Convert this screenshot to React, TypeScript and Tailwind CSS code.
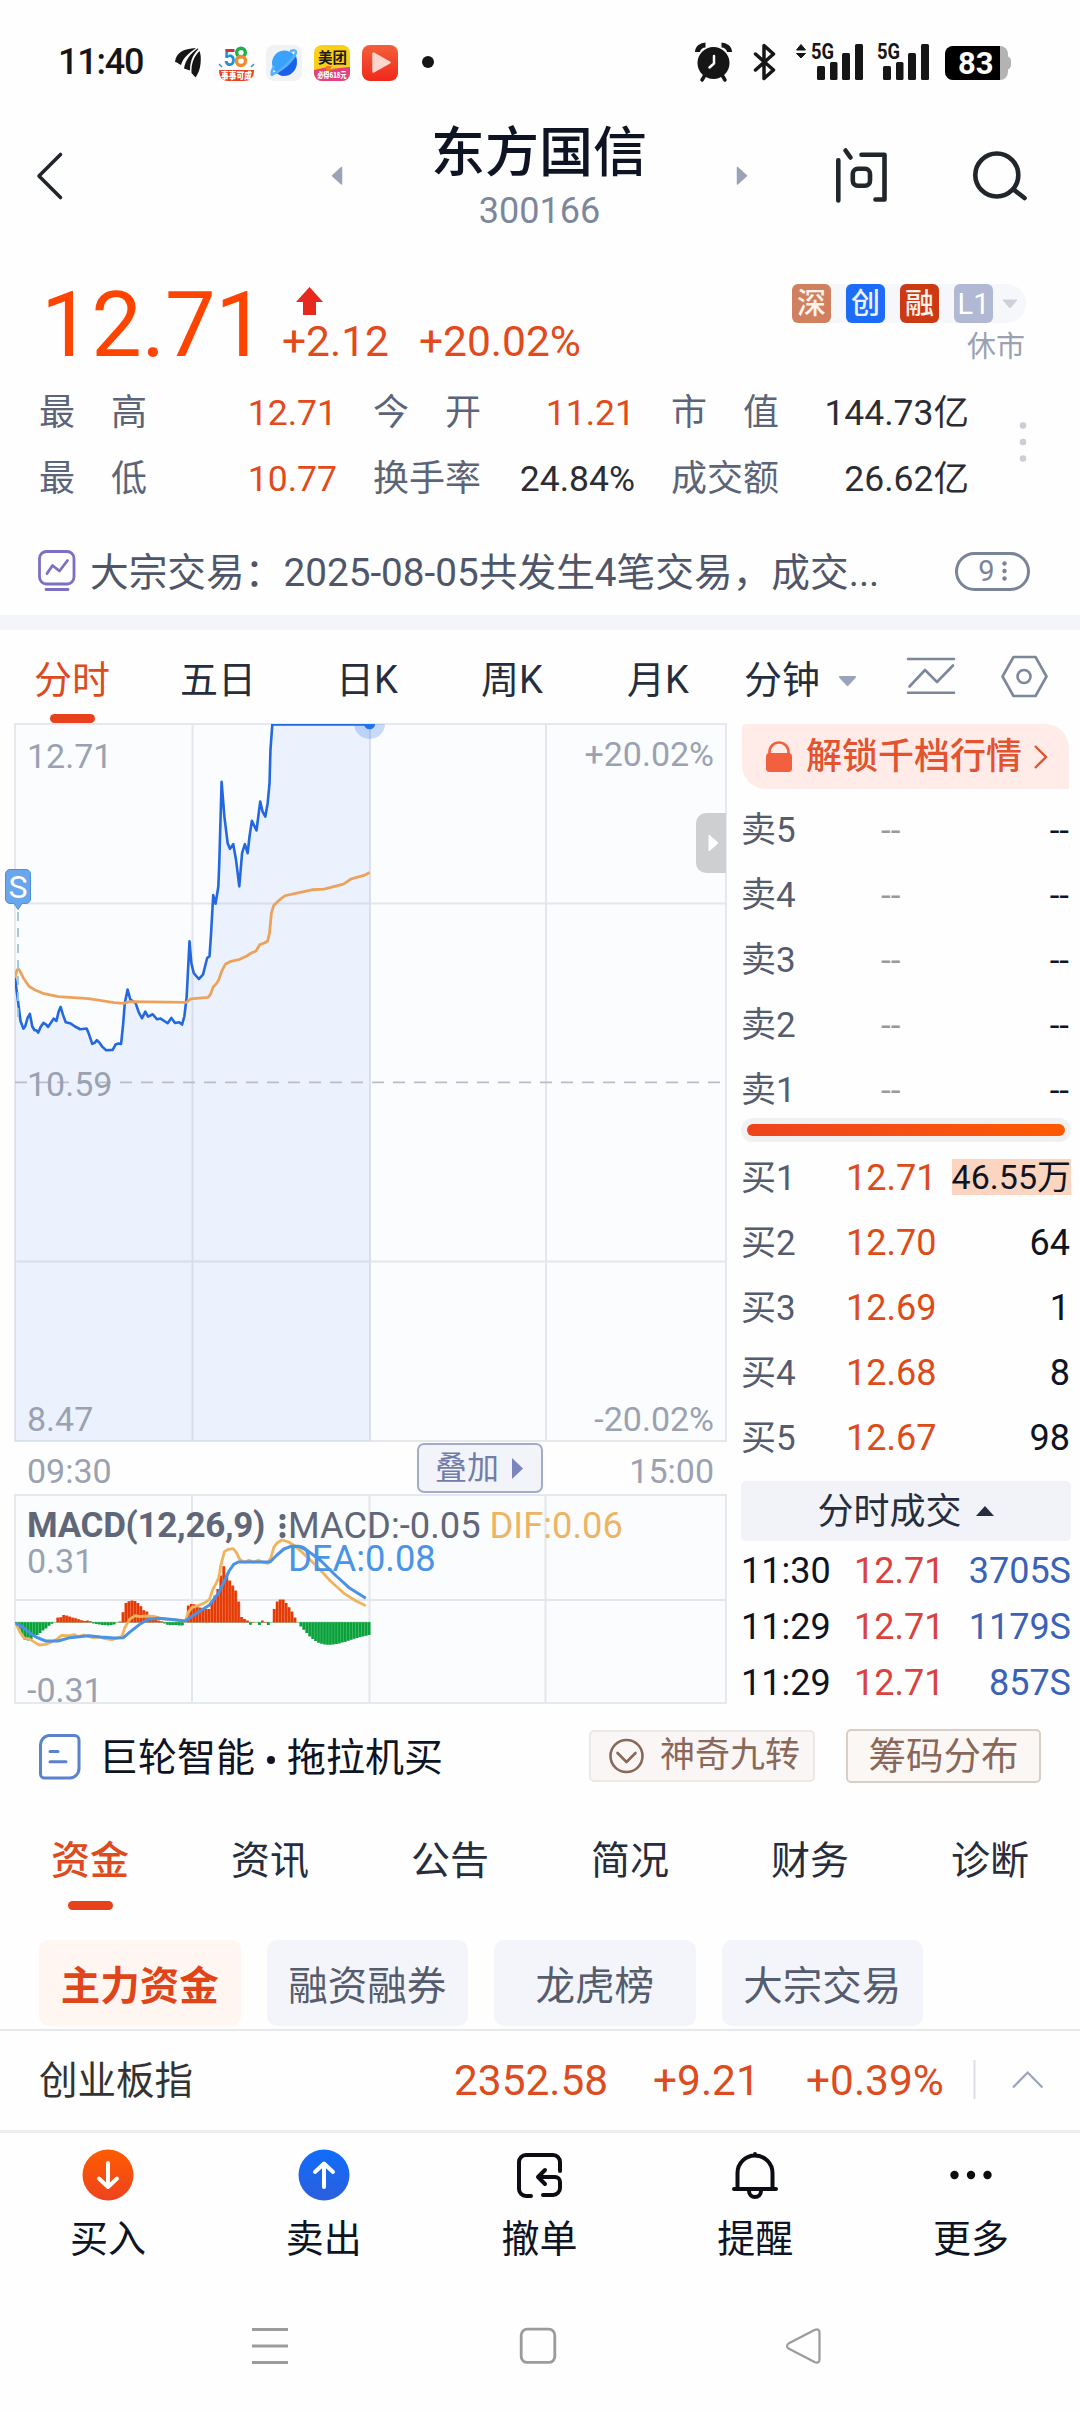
import type { ReactNode } from "react";

type IcoProps = { x: number; y: number; w: number; h: number; className?: string; children: ReactNode };

// Icon drawn on the page's own coordinate grid.
function Ico({ x, y, w, h, className = "", children }: IcoProps) {
  return (
    <svg className={`shrink-0 ${className}`} width={w} height={h} viewBox={`${x} ${y} ${w} ${h}`} fill="none">
      {children}
    </svg>
  );
}

function Signal({ arrows }: { arrows?: boolean }) {
  return (
    <Ico x={795} y={40} w={68} h={44}>
      {arrows && <path d="M796.500 50l4.500-5.500 4.500 5.500zM796.500 53.500h9l-4.500 4.500z" fill="#161616" stroke="#161616" strokeLinejoin="round" />}
      <text x="811" y="59" fontFamily="Roboto" fontWeight="700" fontSize="22" fill="#161616" textLength="23" lengthAdjust="spacingAndGlyphs">
        5G
      </text>
      <g fill="#161616">
        <rect x="817" y="66" width="8" height="14" rx="1.500" />
        <rect x="830" y="62" width="7.500" height="18" rx="1.500" />
        <rect x="842" y="53" width="8" height="27" rx="1.500" />
        <rect x="855" y="44" width="8" height="36" rx="1.500" />
      </g>
    </Ico>
  );
}

function StatusBar() {
  return (
    <div className="flex h-[118px] items-start">
      <span className="ml-[58px] mt-[38px] w-[90px] text-[36px] leading-[48px] font-medium tracking-[-1.2px] text-[#161616]">11:40</span>
      <Ico x={148} y={40} w={300} h={44} className="mt-[40px]">
        <path d="M175 62c1-9 8-13.500 21-14-7 5-13 10-15 17-3-1.500-4-3-6-3z" fill="#161616" />
        <path d="M197.500 48.500c-8 6-12 12-13.500 20l6 2c0-8 2-15 8.500-21.500z" fill="#161616" />
        <path d="M199.500 51c1.500 4 1.500 8 1 13s-2 9-5 13.500l-4-4.500c-0.500-9 2-16 8-22z" fill="#161616" />

        <rect x="218" y="45" width="36" height="36" rx="8" fill="#fff" />
        <text x="223.500" y="66" fontFamily="Inter" fontWeight="700" fontSize="23" fill="#1f8fd6" textLength="12" lengthAdjust="spacingAndGlyphs">5</text>
        <path d="M225.500 50.500h9" stroke="#d3303b" strokeWidth="3" />
        <circle cx="241" cy="52.500" r="4.300" stroke="#1fb04c" strokeWidth="3.400" />
        <circle cx="241" cy="61" r="4.500" stroke="#f08a2c" strokeWidth="3.400" />
        <path d="M219 70h35c0 7-3 11-10 11h-16c-6 0-9-4-9-11z" fill="#e8431f" />
        <text x="221" y="78.500" fontFamily="Noto Sans CJK SC" fontWeight="900" fontSize="9.500" fill="#fff" textLength="31" lengthAdjust="spacingAndGlyphs">事事可成</text>
        <path d="M219 64l3 3M254 64l-3 3" stroke="#3b8fd8" strokeWidth="1.500" />

        <rect x="266" y="45" width="36" height="36" rx="8" fill="#f1f2f4" />
        <circle cx="284.500" cy="63" r="12.500" fill="#3aa2fb" />
        <path d="M276 72c8-1 15-8 20-16 3 9-2 20-12 20-4 0-6-2-8-4z" fill="#1c5fe8" />
        <path d="M272 75c-1-2 0-5 2-8M291 51c3-1 5-1 5 1s-2 5-5 8c-5 6-12 12-18 14" stroke="#53b2fb" strokeWidth="2.500" strokeLinecap="round" />

        <clipPath id="mt"><rect x="314" y="45" width="36" height="36" rx="8" /></clipPath>
        <g clipPath="url(#mt)">
          <rect x="314" y="45" width="36" height="36" fill="#fbcf17" />
          <path d="M314 70l14-3 2 2 20-2v14h-36z" fill="#e1417f" />
          <path d="M326 66h6l-2 3h6l-10 3z" fill="#f07a1e" />
        </g>
        <text x="318" y="63" fontFamily="Noto Sans CJK SC" fontWeight="700" fontSize="14.500" fill="#1a1a1a">美团</text>
        <text x="317.500" y="78" fontFamily="Noto Sans CJK SC" fontWeight="900" fontSize="8" fill="#fff" textLength="29" lengthAdjust="spacingAndGlyphs">必得618元</text>

        <linearGradient id="pl" x1="0" y1="0" x2="0" y2="1"><stop stopColor="#f2603a" /><stop offset="1" stopColor="#f0281c" /></linearGradient>
        <rect x="362" y="45" width="36" height="36" rx="8" fill="url(#pl)" />
        <path d="M373.500 53.500v18l16-9z" fill="#ffd5cd" stroke="#ffd5cd" strokeWidth="2.500" strokeLinejoin="round" />
        <circle cx="428" cy="62" r="6" fill="#161616" />
      </Ico>
      <div className="ml-auto mr-[68px] mt-[40px] flex">
        <Ico x={692} y={40} w={103} h={44}>
          <circle cx="713.500" cy="63" r="16" fill="#161616" />
          <path d="M697.500 52c0-4 4-7 8-7M729.500 52c0-4-4-7-8-7" stroke="#161616" strokeWidth="5" />
          <path d="M705 75l-3 5M722 75l3 5" stroke="#161616" strokeWidth="3.500" strokeLinecap="round" />
          <path d="M714 56v7.500l-4.500 4" stroke="#fff" strokeWidth="2.500" strokeLinecap="round" />
          <path d="M755.500 54l18 16-9.500 8.500v-33l9.500 8.500-18 16" stroke="#161616" strokeWidth="3.500" strokeLinejoin="round" strokeLinecap="round" />
        </Ico>
        <Signal arrows />
        <div className="-ml-[2px]">
          <Signal />
        </div>
        <Ico x={929} y={40} w={83} h={44}>
          <rect x="1000" y="56" width="11" height="14" rx="5" fill="#b3b3b3" />
          <rect x="945" y="46" width="63" height="34" rx="8" fill="#b3b3b3" />
          <path d="M953 46h47v34h-47a8 8 0 0 1-8-8v-18a8 8 0 0 1 8-8z" fill="#000" />
          <text x="958" y="74.300" fontFamily="Roboto" fontWeight="700" fontSize="31" fill="#fff">83</text>
        </Ico>
      </div>
    </div>
  );
}

function Header() {
  return (
    <div className="flex h-[119px] items-center">
      <Ico x={0} y={118} w={400} h={119}>
        <path d="M60.500 154.500L39 176l21.500 21.500" stroke="#20262c" strokeWidth="3.600" strokeLinecap="round" strokeLinejoin="round" />
        <path d="M341.500 167.500v16.500l-9-8.200z" fill="#9aa3b8" stroke="#9aa3b8" strokeWidth="1.500" strokeLinejoin="round" />
      </Ico>
      <div className="w-[278px] text-center">
        <div className="h-[66px] text-[54px] leading-[72px] font-medium text-[#0e1424]">东方国信</div>
        <div className="h-[53px] pl-[1px] text-[36px] leading-[55px] text-[#7d879b]">300166</div>
      </div>
      <Ico x={678} y={118} w={402} h={119}>
        <path d="M737.500 167.500v16.500l9-8.200z" fill="#9aa3b8" stroke="#9aa3b8" strokeWidth="1.500" strokeLinejoin="round" />
        <g stroke="#20262c" strokeWidth="4.600" strokeLinecap="round" strokeLinejoin="round">
          <path d="M838.300 160.300v40.200M845.500 150.500l5 7M861.500 154.800h23v44.700h-9" />
          <rect x="852.800" y="168.800" width="17.200" height="17" rx="5" />
          <circle cx="996.800" cy="175" r="21.500" />
          <path d="M1013.500 189.500l11 8.500" />
        </g>
      </Ico>
    </div>
  );
}

const tags = [
  { t: "深", c: "bg-[#d07f5f] text-[#fff3ec]" },
  { t: "创", c: "bg-[#1d6cf7] text-[#eaf2ff]" },
  { t: "融", c: "bg-[#cb3a12] text-[#fff0ea]" },
  { t: "L1", c: "bg-[#b1b8d4] text-white" },
];

const stats = [
  { w: "w-[298px]", rows: [["最高", "12.71", 1], ["最低", "10.77", 1]] },
  { w: "w-[262px]", rows: [["今开", "11.21", 1], ["换手率", "24.84%", 0]] },
  { w: "w-[298px]", rows: [["市值", "144.73亿", 0], ["成交额", "26.62亿", 0]] },
];

function Quote() {
  return (
    <div className="h-[378px] pt-[42px]">
      <div className="flex h-[90px]">
        <span className="ml-[41px] w-[241px] text-[90px] leading-[94px] tracking-[-0.3px] text-[#ff4400]">12.71</span>
        <div>
          <Ico x={282} y={279} w={60} h={38} className="block">
            <path d="M309.500 287l13.500 15h-7v13h-13v-13h-7z" fill="#e8281f" />
          </Ico>
          <div className="flex gap-[30px] text-[42.5px] leading-[49px] text-[#e34a1b]">
            <span>+2.12</span>
            <span>+20.02%</span>
          </div>
        </div>
        <div className="mt-[5px] mr-[54px] ml-auto flex flex-col items-end">
          <div className="flex items-center gap-[15px] rounded-r-[20px] rounded-l-[8px] bg-[#f6f7fa] pr-[8px]">
            {tags.map((t, i) => (
              <span key={t.t} className={`h-[39px] w-[39px] rounded-[6px] text-center text-[29px] leading-[41px] ${i < 3 ? "font-medium" : ""} ${t.c}`}>
                {t.t}
              </span>
            ))}
            <svg className="-ml-[6px]" width="16" height="10" viewBox="0 0 16 10"><path d="M1 1h14L8 9z" fill="#ccd1da" stroke="#ccd1da" strokeLinejoin="round" /></svg>
          </div>
          <span className="mt-[4px] mr-[1px] text-[29px] leading-[40px] text-[#9aa1b1]">休市</span>
        </div>
      </div>
      <div className="mt-[11px] flex h-[131px] gap-[36px] pl-[39px] text-[36px] leading-[66px]">
        {stats.map((s, i) => (
          <div key={i} className={s.w}>
            {s.rows.map(([l, v, up]) => (
              <div key={l} className="flex h-[66px] justify-between">
                <span className="flex w-[108px] justify-between text-[#5c6478]">
                  {String(l).split("").map((c) => <span key={c}>{c}</span>)}
                </span>
                <span className={up ? "text-[35.5px] text-[#e34a1b]" : "text-[35.5px] text-[#2b2d33]"}>{v}</span>
              </div>
            ))}
          </div>
        ))}
        <Ico x={1005} y={380} w={30} h={131}>
          <g fill="#c9ced9"><circle cx="1023" cy="425.500" r="3.300" /><circle cx="1023" cy="442" r="3.300" /><circle cx="1023" cy="458.500" r="3.300" /></g>
        </Ico>
      </div>
      <div className="mt-[16px] flex h-[88px] items-center text-[38.7px] text-[#4f5669]">
        <Ico x={0} y={527} w={90} h={88}>
          <g stroke="#7c70c4" strokeWidth="2.800" strokeLinecap="round" strokeLinejoin="round">
            <rect x="39.500" y="551.500" width="34.500" height="32.500" rx="7" />
            <path d="M47 573.500l5.500-8 7 5.500 8-10.500M46 589.500h22" />
          </g>
        </Ico>
        <span className="w-[865px] pt-[3px] leading-[60px]">大宗交易：2025-08-05共发生4笔交易，成交...</span>
        <span className="flex h-[39px] w-[75px] items-center justify-center gap-[7px] rounded-full border-[3px] border-[#7a8397] text-[29px] leading-[33px] text-[#7a8397]">
          9
          <svg width="5" height="20" viewBox="0 0 5 20" fill="#7a8397"><circle cx="2.500" cy="2.500" r="2.200" /><circle cx="2.500" cy="10" r="2.200" /><circle cx="2.500" cy="17.500" r="2.200" /></svg>
        </span>
      </div>
    </div>
  );
}

function ChartTabs() {
  return (
    <div className="flex h-[94px] pl-[34px] text-[38px] leading-[100px] text-[#262d3d]">
      <span className="relative w-[146px] text-[#dd4b20]">
        分时
        <i className="absolute top-[84px] left-[16px] h-[9px] w-[45px] rounded-full bg-[#e8421c]" />
      </span>
      <span className="w-[156px]">五日</span>
      <span className="w-[145px]">日K</span>
      <span className="w-[146px]">周K</span>
      <span className="w-[117px]">月K</span>
      <span className="w-[76px]">分钟</span>
      <Ico x={820} y={630} w={260} h={94}>
        <path d="M840 677h15l-7.500 8z" fill="#9aa3b8" stroke="#9aa3b8" strokeWidth="2" strokeLinejoin="round" />
        <g stroke="#7d879b" strokeWidth="2.600" strokeLinecap="round" strokeLinejoin="round">
          <path d="M908 659h46M908 692.800h46M909.500 686.500l15.500-16.500 12 12 16-16.500" />
          <path d="M1002.500 676.500l11-19.500h22l11 19.500-11 19.500h-22z" />
          <circle cx="1024" cy="676.500" r="6.500" />
        </g>
      </Ico>
    </div>
  );
}

const priceLine =
  "32,1045 38,1110 44,1175 50,1197 54,1190 59,1165 64,1153 69,1190 74,1202 78,1202 82,1209 87,1192 93,1180 99,1185 103,1192 108,1182 115,1167 121,1174 126,1145 130,1132 135,1155 141,1178 152,1182 160,1190 172,1199 186,1197 190,1210 198,1243 203,1240 208,1232 214,1240 220,1252 228,1262 242,1261 248,1245 254,1242 260,1243 264,1190 268,1120 274,1080 280,1110 291,1120 298,1148 305,1166 312,1146 318,1161 328,1154 337,1169 345,1167 360,1181 368,1165 376,1180 385,1178 391,1185 396,1160 401,1100 407,935 411,1000 416,1030 427,1048 436,1035 445,985 450,980 453,920 458,796 463,822 469,770 471,700 476,456 482,560 489,640 494,657 501,643 507,690 514,770 520,670 526,643 532,670 536,620 541,573 551,602 559,515 564,545 570,560 575,520 579,460 581,360 585,283 796,283";
const avgLine =
  "32,1045 36,1022 39,1017 43,1025 50,1045 62,1070 75,1081 92,1091 125,1101 190,1107 245,1119 265,1121 278,1116 400,1118 410,1108 447,1103 452,1095 458,1072 465,1062 470,1050 476,1025 484,1004 496,995 515,989 530,979 540,970 550,964 558,945 568,940 575,934 579,910 583,850 588,827 600,811 612,798 640,789 670,780 696,778 715,771 738,763 755,747 782,737 794,728";

const bars = [
  -4, -22, -42, -53, -54, -50, -44, -38, -32, -24, -18, -10, -4, 0, 14, 15, 22, 20, 17, 14, 12, 9, 6, 4, 5, 3, -3, -5, -6, -8,
  -8, -9, -8, -6, 0, 2, 30, 58, 63, 65, 64, 58, 48, 36, 32, 22, 12, 12, 5, 3, -3, -7, -8, -8, -8, -9, -9, 0, 50, 55,
  54, 52, 44, 40, 40, 40, 60, 80, 100, 140, 168, 140, 125, 110, 95, 62, 16, 10, 5, -7, 1, 0, -8, 5, 1, -8, 0, 40, 62, 68,
  68, 58, 45, 32, 14, 0, -12, -22, -32, -42, -50, -56, -61, -64, -66, -67, -67, -66, -65, -63, -60, -58, -55, -52, -49, -47, -44, -42, -40, -38,
];
const dif =
  "34,427 42,452 52,472 62,473 72,482 84,492 98,490 112,482 122,475 132,463 150,464 160,461 168,467 180,462 200,470 215,468 225,473 240,476 255,470 262,466 268,440 278,415 290,404 300,407 312,405 330,406 345,412 360,415 375,416 398,421 404,395 412,380 425,374 440,365 450,355 457,325 464,308 470,290 474,255 482,212 490,205 501,203 508,215 515,235 525,244 535,238 545,244 555,238 565,244 575,247 582,230 588,200 595,186 606,177 620,183 632,193 650,215 680,255 710,300 740,338 765,360 786,374";
const dea =
  "34,427 45,435 60,452 80,470 98,480 125,480 150,470 190,464 215,468 245,471 265,470 280,452 300,430 318,415 340,412 365,415 398,420 410,408 430,390 450,372 470,335 482,300 492,270 502,250 512,243 580,243 595,222 610,204 625,196 642,196 660,208 690,240 720,282 750,320 786,352";

function Grid({ mid }: { mid: number[] }) {
  return (
    <g stroke="#e3e6ec" strokeWidth="2">
      <path d={"M176.500 0v720M354.500 0v720M531 0v720" + mid.map((m) => `M0 ${m}h711`).join("")} />
    </g>
  );
}

function Charts() {
  return (
    <div className="-mt-[1px] ml-[14px] w-[713px] text-[34px] leading-[40px] text-[#9aa2b2]">
      <div className="relative h-[719px] border-2 border-[#e6e8ed] bg-[#fbfcfe]">
        <svg className="absolute inset-0" width="710" height="715" viewBox="0 0 711 717" fill="none"><Grid mid={[179, 538]} /></svg>
        <svg className="absolute -top-[1px] -left-[1px] overflow-hidden" width="711" height="717" viewBox="32 282 1528 2154" preserveAspectRatio="none" fill="none">
          <polygon points={`${priceLine} 796,2436 32,2436`} fill="#2b74ee" fillOpacity="0.07" />
          <path d="M32 1358.500h1528" stroke="#b9bdca" strokeWidth="1.800" strokeDasharray="12 9" vectorEffect="non-scaling-stroke" />
          <polyline points={priceLine} stroke="#2468e0" strokeWidth="2.600" strokeLinejoin="round" vectorEffect="non-scaling-stroke" />
          <polyline points={avgLine} stroke="#eda25c" strokeWidth="2.800" strokeLinejoin="round" vectorEffect="non-scaling-stroke" />
          <ellipse cx="794" cy="282" rx="33" ry="45" fill="#2b74ee" fillOpacity="0.25" />
          <ellipse cx="794" cy="282" rx="12" ry="16" fill="#2173f2" />
        </svg>
        <span className="absolute top-[11px] left-[11px]">12.71</span>
        <span className="absolute top-[9px] right-[11px]">+20.02%</span>
        <span className="absolute top-[339px] left-[11px]">10.59</span>
        <span className="absolute bottom-[1px] left-[11px]">8.47</span>
        <span className="absolute right-[11px] bottom-[1px]">-20.02%</span>
        <span className="absolute top-[88px] -right-[1px] flex h-[60px] w-[30px] items-center justify-end rounded-l-[10px] bg-[#cdcfd1] pr-[7px]">
          <svg width="11" height="18" viewBox="0 0 11 18"><path d="M1 1v16l9-8z" fill="#fff" stroke="#fff" strokeLinejoin="round" /></svg>
        </span>
        <svg className="absolute top-[143px] -left-[12px]" width="30" height="150" viewBox="4 868 30 150" fill="none">
          <path d="M18 912v106" stroke="#9cc4e2" strokeWidth="1.800" strokeDasharray="9 7" />
          <path d="M10 869.500h16a4.500 4.500 0 0 1 4.500 4.500v25a4.500 4.500 0 0 1-4.500 4.500h-4l-4 6-4-6h-4a4.500 4.500 0 0 1-4.500-4.500v-25a4.500 4.500 0 0 1 4.500-4.500z" fill="#6aa6ec" stroke="#4f8fd8" />
          <text x="8.500" y="898" fontFamily="Roboto" fontSize="31" fill="#fff" textLength="19" lengthAdjust="spacingAndGlyphs">S</text>
        </svg>
      </div>
      <div className="flex h-[52px] items-center justify-between px-[13px]">
        <span className="pt-[5px]">09:30</span>
        <span className="ml-[218px] flex h-[50px] w-[126px] items-center justify-center gap-[12px] rounded-[7px] border-2 border-[#a3abc8] bg-[#f3f4fa] text-[32px] text-[#717da8]">
          叠加
          <svg width="13" height="23" viewBox="0 0 13 23"><path d="M1 1v21l11-10.500z" fill="#7a86bd" /></svg>
        </span>
        <span className="pt-[5px]">15:00</span>
      </div>
      <div className="relative h-[210px] border-2 border-[#e6e8ed] bg-[#fbfcfe]">
        <svg className="absolute inset-0" width="709" height="206" viewBox="0 0 711 206" preserveAspectRatio="none"><Grid mid={[104]} /></svg>
        <svg className="absolute -top-[1px] -left-[1px]" width="711" height="209" viewBox="32 42 1528 627" preserveAspectRatio="none" fill="none">
          <path d="M32 424h764" stroke="#8fc79b" strokeWidth="1" vectorEffect="non-scaling-stroke" />
          {bars.map((v, i) => (
            <rect key={i} x={32 + i * 6.37} y={v > 0 ? 424 - v : 424} width="5.300" height={Math.abs(v)} fill={v > 0 ? "#e63a05" : "#09a13a"} />
          ))}
          {bars.map((v, i) => (
            <rect key={i} x={32 + i * 6.37} y={v > 0 ? 424 - v : 424} width="6.370" height={Math.abs(v)} fill={v > 0 ? "#e63a05" : "#09a13a"} fillOpacity="0.600" />
          ))}
          <polyline points={dif} stroke="#f0b35c" strokeWidth="2.800" strokeLinejoin="round" vectorEffect="non-scaling-stroke" />
          <polyline points={dea} stroke="#4a92e4" strokeWidth="3" strokeLinejoin="round" vectorEffect="non-scaling-stroke" />
        </svg>
        <div className="absolute top-[13px] left-[11px] flex text-[36.3px] leading-[33px] text-[#5f6778]">
          <span className="w-[251px] text-[35px] font-bold tracking-[-0.3px]">MACD(12,26,9)</span>
          <svg className="-mt-[1px] mr-[1px]" width="9" height="34" viewBox="0 0 9 34" fill="#5f6778"><circle cx="4.500" cy="9" r="3" /><circle cx="4.500" cy="18" r="3" /><circle cx="4.500" cy="27" r="3" /></svg>
          <span className="w-[350px]">
            MACD:-0.05 <span className="text-[#edb465]">DIF:0.06</span> <span className="text-[#4a94e6]">DEA:0.08</span>
          </span>
        </div>
        <span className="absolute top-[45px] left-[11px]">0.31</span>
        <span className="absolute top-[174px] left-[11px]">-0.31</span>
      </div>
    </div>
  );
}

const buys = [["买1", "12.71", "46.55万"], ["买2", "12.70", "64"], ["买3", "12.69", "1"], ["买4", "12.68", "8"], ["买5", "12.67", "98"]];
const trades = [["11:30", "3705S"], ["11:29", "1179S"], ["11:29", "857S"]];

function OrderBook() {
  return (
    <div className="ml-[14px] w-[330px] text-[36px]">
      <div className="ml-[1px] flex h-[65px] w-[327px] items-center rounded-tl-[4px] rounded-tr-[24px] rounded-bl-[24px] bg-[#ffece8] pl-[23px] text-[36px] leading-[65px] text-[#e3532f]">
        <svg className="mr-[13px]" width="28" height="32" viewBox="0 0 28 32" fill="none">
          <rect x="1" y="12" width="26" height="19" rx="3.500" fill="#f2603f" />
          <path d="M4.500 13v-2a9.500 9.500 0 0 1 19 0v2" stroke="#f2603f" strokeWidth="2.600" />
        </svg>
        <span className="pt-[2px] font-medium">解锁千档行情</span>
        <svg className="ml-[11px]" width="15" height="24" viewBox="0 0 15 24" fill="none"><path d="M2 1l11 11L2 23" stroke="#e3532f" strokeWidth="2.400" /></svg>
      </div>
      <div className="mt-[8px] text-[35px] leading-[67px]">
        {["卖5", "卖4", "卖3", "卖2", "卖1"].map((s) => (
          <div key={s} className="flex h-[65px] pr-[2px]">
            <span className="w-[140px]"><span className="text-[#545c6e]">{s}</span></span>
            <span className="flex-1 text-[#999]">--</span>
            <span className="text-[#0e1424]">--</span>
          </div>
        ))}
      </div>
      <div className="-mt-[4px] h-[24px] rounded-full bg-[#f1f1f2] p-[6px]">
        <div className="h-full rounded-full bg-linear-to-r from-[#ef431d] to-[#ff5a00]" />
      </div>
      <div className="mt-[4px] leading-[67px]">
        {buys.map(([l, p, q], i) => (
          <div key={l} className="flex h-[65px] items-center">
            <span className="w-[105px] text-[35px] text-[#545c6e]">{l}</span>
            <span className="flex-1 text-[#dd4b18]">{p}</span>
            {i === 0 ? (
              <span className="mb-[4px] bg-[#fcd5c0] text-[34px] leading-[36px] text-[#0e1424]">{q}</span>
            ) : (
              <span className="pr-[1px] text-[#0e1424]">{q}</span>
            )}
          </div>
        ))}
      </div>
      <div className="mt-[10px] flex h-[60px] items-center justify-center gap-[12px] rounded-[5px] bg-[#f2f3f9] leading-[60px] text-[#262d3d]">
        <span className="pt-[2px] pr-[1px]">分时成交</span>
        <svg width="20" height="12" viewBox="0 0 20 12"><path d="M1 11h18L10 1z" fill="#262d3d" /></svg>
      </div>
      <div className="mt-[1px] leading-[58px]">
        {trades.map(([t, q], i) => (
          <div key={i} className="flex h-[56px]">
            <span className="w-[113px] text-[#0e1424]">{t}</span>
            <span className="flex-1 text-[#d9433e]">12.71</span>
            <span className="text-[#3a62b8]">{q}</span>
          </div>
        ))}
      </div>
    </div>
  );
}

function Strategy() {
  return (
    <div className="flex h-[105px] items-center">
      <Ico x={0} y={1703} w={99} h={105}>
        <g stroke="#5b82cc" strokeWidth="3" strokeLinecap="round">
          <path d="M48.500 1735.500h26a4.500 4.500 0 0 1 4.500 4.500v28.500a9.500 9.500 0 0 1-9.500 9.500h-25a4 4 0 0 1-4-4v-29a9.500 9.500 0 0 1 8-9.500z" />
          <path d="M50 1751.500h8M50 1761.800h16" />
        </g>
      </Ico>
      <span className="flex w-[490px] items-center pt-[5px] text-[39px] leading-[60px] text-[#0e1424]">
        巨轮智能<i className="mx-[12px] mt-[4px] h-[8px] w-[8px] rounded-full bg-[#0e1424]" />拖拉机买
      </span>
      <span className="flex h-[52px] w-[226px] items-center gap-[16px] rounded-[5px] border-2 border-[#ebe8e6] bg-[#f9f6f5] pl-[18px] text-[35px] leading-[50px] text-[#8a6859]">
        <svg width="35" height="36" viewBox="0 0 35 36" fill="none" stroke="#8a6859" strokeWidth="2.600" strokeLinecap="round" strokeLinejoin="round">
          <circle cx="17.500" cy="18" r="16" />
          <path d="M8.500 15l9 9 9-9" />
        </svg>
        <span>神奇九转</span>
      </span>
      <span className="ml-[31px] h-[54px] w-[195px] rounded-[5px] border-2 border-[#d9cec6] bg-[#fbf7f5] text-center text-[37.5px] leading-[51px] text-[#8a6859]">筹码分布</span>
    </div>
  );
}

function InfoTabs() {
  return (
    <>
      <div className="grid h-[104px] grid-cols-6 text-center text-[39px] leading-[107px] text-[#262d3d]">
        {["资金", "资讯", "公告", "简况", "财务", "诊断"].map((t, i) => (
          <span key={t} className={i === 0 ? "relative font-medium text-[#dd4b20]" : ""}>
            {t}
            {i === 0 && <i className="absolute top-[93px] left-[68px] h-[9px] w-[45px] rounded-full bg-[#e8421c]" />}
          </span>
        ))}
      </div>
      <div className="mt-[28px] flex h-[89px] gap-[26px] pl-[39px] text-[39.5px] leading-[93px]">
        {["主力资金", "融资融券", "龙虎榜", "大宗交易"].map((t, i) => (
          <span
            key={t}
            className={`h-[86px] w-[201.5px] rounded-[10px] text-center ${i === 0 ? "bg-[#fff6f1] font-bold text-[#e0451a]" : "bg-[#f4f5fa] text-[#545c6e]"}`}
          >
            {t}
          </span>
        ))}
      </div>
    </>
  );
}

function IndexBar() {
  return (
    <div className="flex h-[104px] items-center border-t-2 border-b-[3px] border-t-[#e7e8ea] border-b-[#ededee] pt-[1px] text-[42.4px] text-[#dd4b20]">
      <span className="ml-[39px] w-[415px] text-[38.5px] text-[#333]">创业板指</span>
      <span className="w-[199px]">2352.58</span>
      <span className="w-[153px]">+9.21</span>
      <span>+0.39%</span>
      <Ico x={973} y={2032} w={107} h={98} className="ml-auto">
        <path d="M974.500 2060v39" stroke="#dde0e6" strokeWidth="2" />
        <path d="M1013 2087.500l14.700-15 14.700 15" stroke="#9aa3b8" strokeWidth="2.200" />
      </Ico>
    </div>
  );
}

function Actions() {
  const items: [string, ReactNode][] = [
    ["买入", <g key="b"><circle cx="30" cy="30" r="25.500" fill="url(#buy)" /><path d="M30 18v23M21 33.500l9 8.500 9-8.500" stroke="#fff" strokeWidth="4" strokeLinecap="round" strokeLinejoin="round" /></g>],
    ["卖出", <g key="s"><circle cx="30" cy="30" r="25.500" fill="url(#sell)" /><path d="M30 42v-23M21 27l9-8.500 9 8.500" stroke="#fff" strokeWidth="4" strokeLinecap="round" strokeLinejoin="round" /></g>],
    ["撤单", <path key="c" d="M51 26v-9a7 7 0 0 0-7-7h-27a7 7 0 0 0-7 7v27a7 7 0 0 0 7 7h5M36 25l-7 7 7 7M29 32h17a5 5 0 0 1 5 5v6a7 7 0 0 1-7 7h-10" stroke="#0b0d12" strokeWidth="4" strokeLinecap="round" strokeLinejoin="round" />],
    ["提醒", <path key="r" d="M12.500 44v-16a17.500 17.500 0 0 1 35 0v16M9 44h42M24 46a6 6 0 0 0 12 0M30 10v-1" stroke="#0b0d12" strokeWidth="4" strokeLinecap="round" />],
    ["更多", <g key="m" fill="#0b0d12"><circle cx="13.500" cy="30" r="4.200" /><circle cx="30" cy="30" r="4.200" /><circle cx="46.500" cy="30" r="4.200" /></g>],
  ];
  return (
    <div className="grid h-[167px] grid-cols-5 pt-[12px] pr-[1px]">
      {items.map(([t, icon]) => (
        <div key={t} className="flex flex-col items-center">
          <svg width="60" height="60" viewBox="0 0 60 60" fill="none">
            <linearGradient id="buy" x1="0" y1="0" x2="0" y2="1"><stop stopColor="#ff5c00" /><stop offset="1" stopColor="#ee431f" /></linearGradient>
            <linearGradient id="sell" x1="0" y1="0" x2="0" y2="1"><stop stopColor="#106cfb" /><stop offset="1" stopColor="#2b5fdc" /></linearGradient>
            {icon}
          </svg>
          <span className="mt-[8px] text-[38px] leading-[52px] text-[#0e1424]">{t}</span>
        </div>
      ))}
    </div>
  );
}

function NavBar() {
  return (
    <Ico x={0} y={2300} w={1080} h={112} className="block">
      <g stroke="#9b9b9b" strokeWidth="2.800" strokeLinejoin="round">
        <path d="M252 2329.500h36M252 2346h36M252 2362.500h36" />
        <rect x="521.200" y="2329.200" width="33.600" height="33.200" rx="6" />
        <path d="M788.500 2343.500l26-13.500q5-2 5 3v26q0 5-5 3l-26-13.500q-3-2.500 0-5z" strokeWidth="2.200" />
      </g>
    </Ico>
  );
}

export default function App() {
  return (
    <div className="h-[2412px] w-[1080px] overflow-hidden bg-[#fefefe] font-['Roboto','Noto_Sans_CJK_SC',sans-serif]">
      <StatusBar />
      <Header />
      <Quote />
      <div className="h-[15px] bg-[#f4f5fa]" />
      <ChartTabs />
      <div className="flex h-[979px]">
        <Charts />
        <OrderBook />
      </div>
      <Strategy />
      <InfoTabs />
      <IndexBar />
      <Actions />
      <NavBar />
    </div>
  );
}
